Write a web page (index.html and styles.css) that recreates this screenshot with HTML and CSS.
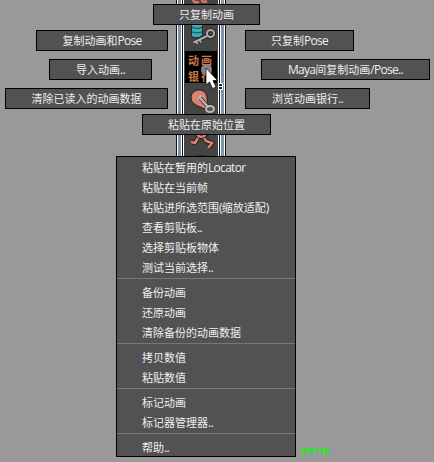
FILE: index.html
```html
<!DOCTYPE html>
<html lang="zh-CN">
<head>
<meta charset="utf-8">
<title>动画银行</title>
<link rel="stylesheet" href="styles.css">
</head>
<body>
<main class="viewport">
  <div class="shelf">
    <svg class="shelf-art" width="50" height="160" viewBox="176 0 50 160">
      <path d="M193 0q1 3 6 2M202 0q0 3 5 1" fill="none" stroke="#d97563" stroke-width="2.500"/>
      <path d="M191.500 22h11v13.500q-5 4-11 1z" fill="#3fabb5" stroke="#222"/>
      <path d="M192 27.500q5 2 10 0M192 32q5 2 10 0" fill="none" stroke="#164e55"/>
      <path d="M194 42.500L207 36M196 41l1.500 3M199.500 39.500l1.500 3" fill="none" stroke="#292929" stroke-width="4"/>
      <circle cx="210.500" cy="33.500" r="3.500" fill="none" stroke="#292929" stroke-width="4"/>
      <path d="M193.500 42.500L207 36M196 41l1.500 3M199.500 39.500l1.500 3" fill="none" stroke="#aaa" stroke-width="2"/>
      <circle cx="210.500" cy="33.500" r="3.500" fill="none" stroke="#aaa" stroke-width="2"/>
      <rect x="185" y="51" width="32" height="32" fill="#000"/>
      <path d="M191 98c0-5 4-8 8-8 5 0 8 4 8 8l1 7-4 4c-2-2-5-2-8-4s-5-4-5-7z" fill="#df806e" stroke="#222"/>
      <path d="M200 98l9 10" stroke="#333" stroke-width="4"/>
      <path d="M200 98l9 10" stroke="#b5b5b5" stroke-width="2.500"/>
      <path d="M198 99l4-4" stroke="#b5b5b5" stroke-width="2"/>
      <ellipse cx="210" cy="109" rx="4" ry="3" fill="#555" stroke="#bbb" stroke-width="2"/>
      <path d="M197 134q4 6 9 0M198 138l-3 5-4-1M204 138l2 3 6 2-4 5" fill="none" stroke="#222" stroke-width="4.500"/>
      <path d="M197 134q4 6 9 0M198 138l-3 5-4-1M204 138l2 3 6 2-4 5" fill="none" stroke="#df806e" stroke-width="2.500"/>
      <ellipse cx="201" cy="157" rx="7" ry="2" fill="#2b2b2b"/>
    </svg>
    <div class="bank"><div class="bank-row">动画</div><div class="bank-row">银行</div></div>
  </div>

  <div class="radial top">只复制动画</div>
  <div class="radial copy-both">复制动画和<span class="lat">Pose</span></div>
  <div class="radial import">导入动画<span class="lat">..</span></div>
  <div class="radial clear">清除已读入的动画数据</div>
  <div class="radial copy-pose">只复制<span class="lat">Pose</span></div>
  <div class="radial maya"><span class="lat">Maya</span>间复制动画<span class="lat">/Pose..</span></div>
  <div class="radial browse">浏览动画银行<span class="lat">..</span></div>
  <div class="radial bottom">粘贴在原始位置</div>

  <div class="menu">
    <div class="item">粘贴在暂用的<span class="lat">Locator</span></div>
    <div class="item">粘贴在当前帧</div>
    <div class="item">粘贴进所选范围<span class="lat">(</span>缩放适配<span class="lat">)</span></div>
    <div class="item">查看剪贴板<span class="lat">..</span></div>
    <div class="item">选择剪贴板物体</div>
    <div class="item">测试当前选择<span class="lat">..</span></div>
    <hr class="sep">
    <div class="item">备份动画</div>
    <div class="item">还原动画</div>
    <div class="item">清除备份的动画数据</div>
    <hr class="sep">
    <div class="item">拷贝数值</div>
    <div class="item">粘贴数值</div>
    <hr class="sep">
    <div class="item">标记动画</div>
    <div class="item">标记器管理器<span class="lat">..</span></div>
    <hr class="sep">
    <div class="item">帮助<span class="lat">..</span></div>
  </div>

  <div class="camera">persp</div>

  <svg class="pointer" width="24" height="32" viewBox="200 60 24 32">
    <circle cx="206.500" cy="69.500" r="5.500" fill="#858585"/>
    <path d="M206 68v17l3.500-3 3 6.500 3.500-1.500-3-6.500h4.500z" fill="#fff" stroke="#000" stroke-width=".7"/>
    <path d="M218.500 83.500h4v6h-4zM219 86.500h3" fill="#222" stroke="#fff"/>
  </svg>
</main>
</body>
</html>
```
FILE: styles.css
```css
body {
  margin: 0;
}

.viewport {
  position: relative;
  width: 434px;
  height: 462px;
  overflow: hidden;
  background: #999;
  color: #eee;
  font: 11px/20px "Noto Sans CJK SC", sans-serif;
  white-space: nowrap;
}

.lat {
  font-family: "Open Sans", sans-serif;
  font-size: 12px;
  letter-spacing: -0.7px;
}

.shelf {
  position: relative;
  width: 50px;
  height: 160px;
  margin-left: 176px;
  background: linear-gradient(90deg, #111 0 1px, #fff 1px 2px, #7d92ab 2px 5px, #fff 5px 6px, #111 6px 7px, #fff 7px 8px, #444 8px 42px, #fff 42px 43px, #111 43px 44px, #fff 44px 45px, #7d92ab 45px 48px, #fff 48px 49px, #111 49px);
}

.shelf-art {
  display: block;
}

.bank {
  position: absolute;
  left: 12px;
  top: 52px;
  color: #d07545;
  font-size: 11px;
  font-weight: bold;
  line-height: 16px;
  letter-spacing: 2px;
}

.bank-row {
  height: 16px;
}

.radial {
  position: absolute;
  box-sizing: border-box;
  height: 21px;
  border: 1px solid #000;
  background: #525252;
  line-height: 19px;
  text-align: center;
}

.top { left: 153px; top: 4px; width: 107px; }
.copy-both { left: 36px; top: 30px; width: 132px; }
.import { left: 49px; top: 59px; width: 103px; }
.clear { left: 5px; top: 88px; width: 163px; }
.copy-pose { left: 245px; top: 30px; width: 109px; }
.maya { left: 261px; top: 59px; width: 169px; }
.browse { left: 245px; top: 88px; width: 125px; }
.bottom { left: 142px; top: 114px; width: 129px; }

.menu {
  position: absolute;
  left: 116px;
  top: 156px;
  box-sizing: border-box;
  width: 180px;
  height: 301px;
  border: 1px solid #000;
  background: #525252;
}

.item {
  height: 20px;
  padding-left: 25px;
}

.sep {
  height: 1px;
  margin: 1px 0 3px;
  border: 0;
  background: #777;
}

.camera {
  position: absolute;
  left: 302px;
  top: 440px;
  color: #0f0;
  font: bold 9px/20px "DejaVu Sans Mono", monospace;
}

.pointer {
  position: absolute;
  left: 200px;
  top: 60px;
}
```
